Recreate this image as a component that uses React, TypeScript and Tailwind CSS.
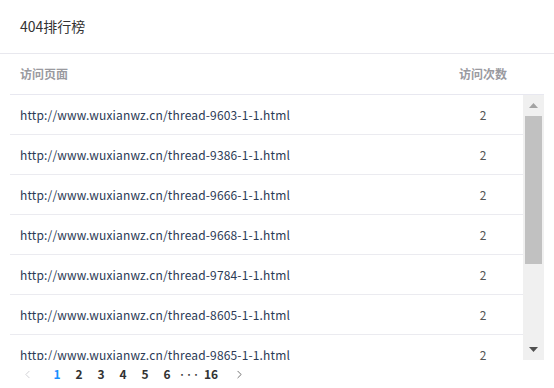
import { ChevronLeft, ChevronRight } from 'lucide-react'

const ROWS = ['9603', '9386', '9666', '9668', '9784', '8605', '9865', '9012', '9540', '9777']

const FONT = "font-['Noto_Sans_CJK_SC','Noto_Sans',sans-serif]"

export default function App() {
  return (
    <div className={`h-[388px] w-[554px] overflow-hidden bg-white text-[#333] ${FONT}`}>
      <div className="flex h-[54px] items-center border-b border-[#e8e8ee] px-5 text-[14px] text-[#333]">
        404排行榜
      </div>

      <div className="pl-[10px] pr-[10px]">
        <div className="flex h-[41px] items-center border-b border-[#e8e8f0] text-[12px] font-bold text-[#9a9a9f]">
          <div className="flex-1 pl-[10px]">访问页面</div>
          <div className="w-[80px] text-center">访问次数</div>
          <div className="w-[21px]" />
        </div>

        <div className="flex h-[265px]">
          <div className="flex-1 overflow-hidden">
            {ROWS.map((id) => (
              <div key={id} className="flex h-10 items-center border-b border-[#ebebf0] text-[12px] text-[#2b3a55]">
                <div className="flex-1 pl-[10px] tracking-[0.15px]">http://www.wuxianwz.cn/thread-{id}-1-1.html</div>
                <div className="w-[80px] text-center text-[#555]">2</div>
              </div>
            ))}
          </div>

          {/* fake classic scrollbar */}
          <div className="flex w-[21px] flex-col bg-[#f0f0f0]">
            <div className="flex h-[21px] items-center justify-center">
              <svg width="9" height="5" viewBox="0 0 9 5">
                <path d="M4.5 0L9 5H0z" fill="#a3a3a3" />
              </svg>
            </div>
            <div className="flex-1 px-[2px]">
              <div className="h-[148px] bg-[#c1c1c1]" />
            </div>
            <div className="flex h-[21px] items-center justify-center">
              <svg width="9" height="5" viewBox="0 0 9 5">
                <path d="M0 0H9L4.5 5z" fill="#505050" />
              </svg>
            </div>
          </div>
        </div>

        <div className="flex h-[28px] items-center pl-[6px] text-[12px] font-bold text-[#333]">
          <div className="flex w-[22px] justify-center text-[#c8c8cc]">
            <ChevronLeft size={13} strokeWidth={1.5} />
          </div>
          <div className="ml-[8px] flex">
            {['1', '2', '3', '4', '5', '6', '•••', '16'].map((p) => (
              <div
                key={p}
                className={`flex w-[22px] items-center justify-center ${p === '1' ? 'text-[#1890ff]' : ''} ${p === '•••' ? 'text-[7px]' : ''}`}
              >
                {p}
              </div>
            ))}
          </div>
          <div className="ml-[6px] flex w-[22px] justify-center text-[#555]">
            <ChevronRight size={13} strokeWidth={1.5} />
          </div>
        </div>
      </div>
    </div>
  )
}
